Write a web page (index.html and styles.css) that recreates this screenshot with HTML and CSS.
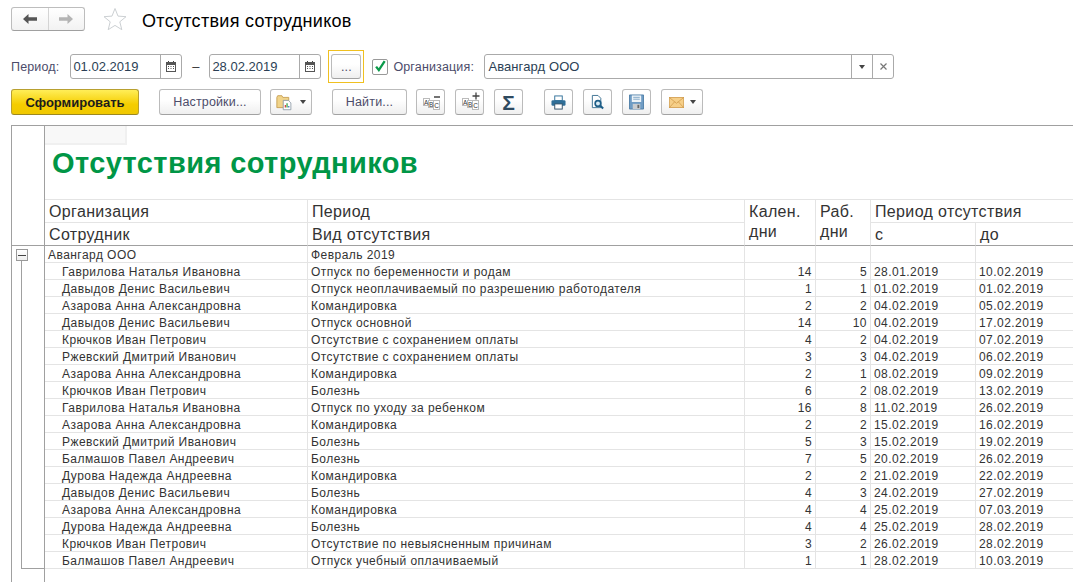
FILE: index.html
```html
<!DOCTYPE html>
<html lang="ru">
<head>
<meta charset="utf-8">
<title>Отсутствия сотрудников</title>
<link rel="stylesheet" href="styles.css">
</head>
<body>
<header class="head">
  <div class="nav">
    <button class="nav-btn nav-back"><svg width="16" height="12" viewBox="0 0 16 12"><path d="M1 6 6.5 1v3.2H15v3.6H6.5V11z" fill="#555"/></svg></button>
    <button class="nav-btn"><svg width="16" height="12" viewBox="0 0 16 12"><path d="M15 6 9.5 1v3.2H1v3.6h8.5V11z" fill="#b4b4b4"/></svg></button>
  </div>
  <svg class="star" width="24" height="24" viewBox="0 0 24 24"><path d="M12 1.5l3 7.6 8 .6-6.200 5.100 2 7.900L12 18.400 5.200 22.700l2-7.900L1 9.700l8-.6z" fill="#fff" stroke="#ccd0d3"/></svg>
  <h1 class="title">Отсутствия сотрудников</h1>
</header>

<div class="filters">
  <span class="label">Период:</span>
  <div class="field date"><span class="value">01.02.2019</span><span class="addon"><svg width="10" height="11" viewBox="0 0 10 11"><path d="M2.500 0v2M7.500 0v2" stroke="#444"/><rect x=".5" y="1.500" width="9" height="9" fill="#fff" stroke="#555"/><rect x="1" y="2" width="8" height="2" fill="#555"/><path d="M2 5.500h1M4.500 5.500h1M7 5.500h1M2 7.500h1M4.500 7.500h1M7 7.500h1" stroke="#555"/></svg></span></div>
  <span class="dash">–</span>
  <div class="field date"><span class="value">28.02.2019</span><span class="addon"><svg width="10" height="11" viewBox="0 0 10 11"><path d="M2.500 0v2M7.500 0v2" stroke="#444"/><rect x=".5" y="1.500" width="9" height="9" fill="#fff" stroke="#555"/><rect x="1" y="2" width="8" height="2" fill="#555"/><path d="M2 5.500h1M4.500 5.500h1M7 5.500h1M2 7.500h1M4.500 7.500h1M7 7.500h1" stroke="#555"/></svg></span></div>
  <div class="focus"><button class="btn dots">...</button></div>
  <span class="check"><svg width="18" height="18" viewBox="0 0 18 18"><path d="M4 8.500 7.500 13 15 1.500" fill="none" stroke="#0a9a4a" stroke-width="3"/></svg></span>
  <span class="label org-label">Организация:</span>
  <div class="field org"><span class="value">Авангард ООО</span><span class="addon"><i class="caret"></i></span><span class="addon"><svg width="9" height="9" viewBox="0 0 9 9"><path d="M1.500 1.500l6 6M7.500 1.500l-6 6" stroke="#777" stroke-width="1.200"/></svg></span></div>
</div>

<div class="toolbar">
  <button class="btn primary">Сформировать</button>
  <button class="btn w-settings">Настройки...</button>
  <button class="btn split"><svg width="17" height="17" viewBox="0 0 20 20"><path d="M1 16V4l1-2h5l1 2h7v4H9v8z" fill="#f1d48a" stroke="#c49a4a"/><path d="M8.500 7.500h6l3 3v8h-9z" fill="#fff" stroke="#8c9aa5"/><path d="M11 16v-3" stroke="#d8443a" stroke-width="1.500"/><path d="M13 16v-5" stroke="#3aa34a" stroke-width="1.500"/><path d="M15 16v-2" stroke="#3a78c4" stroke-width="1.500"/></svg><i class="caret"></i></button>
  <button class="btn w-find">Найти...</button>
  <button class="btn icon"><svg width="22" height="20" viewBox="0 0 22 20"><rect x="3.500" y="6.500" width="6" height="7" fill="#fff" stroke="#bbb"/><rect x="8.500" y="8.500" width="5" height="7" fill="#fff" stroke="#bbb"/><rect x="13.500" y="8.500" width="6" height="9" fill="#fff" stroke="#bbb"/><text class="abc" x="4" y="12.500">A</text><text class="abc" x="9" y="14.500">B</text><text class="abc" x="14.200" y="16">C</text><path d="M14 5h6" stroke="#444" stroke-width="1.500"/></svg></button>
  <button class="btn icon"><svg width="22" height="20" viewBox="0 0 22 20"><rect x="3.500" y="6.500" width="6" height="7" fill="#fff" stroke="#bbb"/><rect x="8.500" y="8.500" width="5" height="7" fill="#fff" stroke="#bbb"/><rect x="13.500" y="8.500" width="6" height="9" fill="#fff" stroke="#bbb"/><text class="abc" x="4" y="12.500">A</text><text class="abc" x="9" y="14.500">B</text><text class="abc" x="14.200" y="16">C</text><path d="M13.500 4h7M17 .5v7" stroke="#444" stroke-width="1.300"/></svg></button>
  <button class="btn icon sigma">Σ</button>
  <button class="btn icon gap-l"><svg width="15" height="15" viewBox="0 0 16 16"><rect x="4" y="1" width="8" height="5" fill="#fff" stroke="#2f6f98"/><rect x=".5" y="5.500" width="15" height="6" rx="1.500" fill="#2f6f98"/><rect x="4" y="9.500" width="8" height="5.500" fill="#fff" stroke="#2f4f68"/></svg></button>
  <button class="btn icon"><svg width="15" height="16" viewBox="0 0 16 17"><path d="M2.500 1.500h6l3 3v10h-9z" fill="#fff" stroke="#3a6f90"/><circle cx="8.500" cy="10" r="3" fill="#d9ecf6" stroke="#1f5f88" stroke-width="1.800"/><path d="M11 12.500l3 3" stroke="#1f5f88" stroke-width="2.200"/></svg></button>
  <button class="btn icon"><svg width="15" height="16" viewBox="0 0 16 16"><path d="M.5.500h15v15H.5z" fill="#6f9cc4" stroke="#4f7fa8"/><rect x="3" y="1" width="10" height="7" fill="#eef4f8"/><path d="M4.500 3h7M4.500 5h7" stroke="#7ea4c4"/><rect x="4" y="10" width="8" height="5.500" fill="#c8ccd0"/><rect x="9" y="11" width="2" height="3.500" fill="#666"/></svg></button>
  <button class="btn split mail"><svg width="15" height="11" viewBox="0 0 21 14" preserveAspectRatio="none"><rect x=".5" y=".5" width="20" height="13" fill="#f6cf88" stroke="#d09a4a"/><path d="M1 1l9.500 7L20 1M1 13l7-7M20 13l-7-7" fill="none" stroke="#d09a4a"/></svg><i class="caret"></i></button>
</div>

<section class="sheet">
  <aside class="gutter">
    <div class="gutter-head"></div>
    <div class="tree-box"><i></i></div>
    <div class="tree-line"></div>
  </aside>
  <div class="body">
    <table class="report">
      <colgroup>
        <col class="c1"><col class="c2"><col class="c3"><col class="c4"><col class="c5"><col class="c6">
      </colgroup>
      <thead>
        <tr class="title-row"><td colspan="6"><div class="corner"></div><div class="report-title">Отсутствия сотрудников</div></td></tr>
        <tr class="hrow"><th>Организация</th><th>Период</th><th rowspan="2" class="multi">Кален.<br>дни</th><th rowspan="2" class="multi">Раб.<br>дни</th><th colspan="2" class="last">Период отсутствия</th></tr>
        <tr class="hrow sep"><th>Сотрудник</th><th>Вид отсутствия</th><th>с</th><th class="last">до</th></tr>
      </thead>
      <tbody>
        <tr><td>Авангард ООО</td><td>Февраль 2019</td><td></td><td></td><td></td><td class="last"></td></tr>
        <tr><td class="in">Гаврилова Наталья Ивановна</td><td>Отпуск по беременности и родам</td><td class="n">14</td><td class="n">5</td><td>28.01.2019</td><td class="last">10.02.2019</td></tr>
        <tr><td class="in">Давыдов Денис Васильевич</td><td>Отпуск неоплачиваемый по разрешению работодателя</td><td class="n">1</td><td class="n">1</td><td>01.02.2019</td><td class="last">01.02.2019</td></tr>
        <tr><td class="in">Азарова Анна Александровна</td><td>Командировка</td><td class="n">2</td><td class="n">2</td><td>04.02.2019</td><td class="last">05.02.2019</td></tr>
        <tr><td class="in">Давыдов Денис Васильевич</td><td>Отпуск основной</td><td class="n">14</td><td class="n">10</td><td>04.02.2019</td><td class="last">17.02.2019</td></tr>
        <tr><td class="in">Крючков Иван Петрович</td><td>Отсутствие с сохранением оплаты</td><td class="n">4</td><td class="n">2</td><td>04.02.2019</td><td class="last">07.02.2019</td></tr>
        <tr><td class="in">Ржевский Дмитрий Иванович</td><td>Отсутствие с сохранением оплаты</td><td class="n">3</td><td class="n">3</td><td>04.02.2019</td><td class="last">06.02.2019</td></tr>
        <tr><td class="in">Азарова Анна Александровна</td><td>Командировка</td><td class="n">2</td><td class="n">1</td><td>08.02.2019</td><td class="last">09.02.2019</td></tr>
        <tr><td class="in">Крючков Иван Петрович</td><td>Болезнь</td><td class="n">6</td><td class="n">2</td><td>08.02.2019</td><td class="last">13.02.2019</td></tr>
        <tr><td class="in">Гаврилова Наталья Ивановна</td><td>Отпуск по уходу за ребенком</td><td class="n">16</td><td class="n">8</td><td>11.02.2019</td><td class="last">26.02.2019</td></tr>
        <tr><td class="in">Азарова Анна Александровна</td><td>Командировка</td><td class="n">2</td><td class="n">2</td><td>15.02.2019</td><td class="last">16.02.2019</td></tr>
        <tr><td class="in">Ржевский Дмитрий Иванович</td><td>Болезнь</td><td class="n">5</td><td class="n">3</td><td>15.02.2019</td><td class="last">19.02.2019</td></tr>
        <tr><td class="in">Балмашов Павел Андреевич</td><td>Болезнь</td><td class="n">7</td><td class="n">5</td><td>20.02.2019</td><td class="last">26.02.2019</td></tr>
        <tr><td class="in">Дурова Надежда Андреевна</td><td>Командировка</td><td class="n">2</td><td class="n">2</td><td>21.02.2019</td><td class="last">22.02.2019</td></tr>
        <tr><td class="in">Давыдов Денис Васильевич</td><td>Болезнь</td><td class="n">4</td><td class="n">3</td><td>24.02.2019</td><td class="last">27.02.2019</td></tr>
        <tr><td class="in">Азарова Анна Александровна</td><td>Командировка</td><td class="n">4</td><td class="n">4</td><td>25.02.2019</td><td class="last">07.03.2019</td></tr>
        <tr><td class="in">Дурова Надежда Андреевна</td><td>Болезнь</td><td class="n">4</td><td class="n">4</td><td>25.02.2019</td><td class="last">28.02.2019</td></tr>
        <tr><td class="in">Крючков Иван Петрович</td><td>Отсутствие по невыясненным причинам</td><td class="n">3</td><td class="n">2</td><td>26.02.2019</td><td class="last">28.02.2019</td></tr>
        <tr><td class="in">Балмашов Павел Андреевич</td><td>Отпуск учебный оплачиваемый</td><td class="n">1</td><td class="n">1</td><td>28.02.2019</td><td class="last">10.03.2019</td></tr>
      </tbody>
    </table>
  </div>
</section>
</body>
</html>
```

FILE: styles.css
```css
* { box-sizing: border-box; }
html, body { height: 100%; }
body {
  margin: 0;
  height: 582px;
  overflow: hidden;
  display: flex;
  flex-direction: column;
  background: #fff;
  font-family: "Liberation Sans", Arial, sans-serif;
  font-size: 12px;
  color: #333;
}
button { font-family: inherit; padding: 0; margin: 0; }

/* head */
.head { display: flex; align-items: center; height: 24px; margin: 7px 0 0 11px; }
.nav {
  display: flex; width: 74px; height: 24px;
  border: 1px solid #bdbdbd; border-bottom-color: #a0a0a0; border-radius: 3px;
  background: linear-gradient(#fff, #f2f2f2);
}
.nav-btn { flex: 1; border: 0; background: none; display: flex; align-items: center; justify-content: center; }
.nav-back { border-right: 1px solid #d4d4d4; }
.star { margin-left: 18px; }
.title { margin: 3px 0 0 15px; font-size: 18px; font-weight: 400; color: #000; line-height: 24px; letter-spacing: .3px; }

/* filters */
.filters { display: flex; align-items: center; height: 33px; margin: 19px 0 0 11px; }
.label { font-size: 12.500px; color: #4c4c6a; letter-spacing: .15px; }
.field {
  display: flex; height: 25px; align-items: stretch;
  border: 1px solid #aaa; border-radius: 3px; background: #fff;
}
.date { width: 112px; margin-left: 11px; }
.value { flex: 1; padding: 0 2px; line-height: 23px; font-size: 13px; color: #2b3f55; }
.addon { width: 21px; border-left: 1px solid #aaa; display: flex; align-items: center; justify-content: center; flex: none; }
.dash { width: 27px; margin-right: -11px; text-align: center; color: #333; font-size: 13px; }
.focus {
  width: 36px; height: 33px; margin-left: 7px;
  border: 1px solid #f0c020; padding: 3px 2px;
  display: flex;
}
.dots { width: 30px; height: 25px; font-size: 11px; color: #666; }
.check {
  width: 16px; height: 16px; margin-left: 8px;
  border: 1px solid #999; border-radius: 2px; background: #fff;
  display: flex; align-items: center; justify-content: center; flex: none;
}
.org-label { margin-left: 5px; width: 80px; flex: none; white-space: nowrap; }
.org { width: 410px; margin-left: 11px; }
.org .value { padding-left: 3px; letter-spacing: .1px; }
.org .addon { width: 21px; }
.caret { display: inline-block; width: 0; height: 0; border: 3.500px solid transparent; border-top: 4px solid #444; border-bottom: 0; }

/* toolbar */
.toolbar { display: flex; align-items: center; height: 26px; margin: 6px 0 0 11px; }
.btn {
  height: 26px;
  border: 1px solid #bbb; border-bottom-color: #a2a2a2; border-radius: 3px;
  background: linear-gradient(#fff 40%, #efefef);
  color: #4c4c6a; font-size: 12.500px; letter-spacing: .15px;
  display: flex; align-items: center; justify-content: center; flex: none;
}
.filters .btn { height: 25px; }
.primary {
  width: 128px; font-weight: 700; font-size: 13px; letter-spacing: 0; color: #1c1c1c;
  background: linear-gradient(#ffee58, #f5cd00 60%, #f0c800);
  border-color: #b8a030; border-bottom-color: #9c8820;
}
.w-settings { width: 102px; margin-left: 20px; }
.split { width: 42px; margin-left: 9px; gap: 7px; }
.w-find { width: 75px; margin-left: 20px; }
.icon { width: 29px; margin-left: 10px; }
.w-find + .icon { margin-left: 9px; }
.gap-l { margin-left: 21px; }
.sigma { font-size: 21px; font-weight: 700; color: #2f4a5f; letter-spacing: 0; line-height: 1; }
.mail { margin-left: 10px; gap: 6px; }
.abc { font-size: 6.500px; font-family: "Liberation Sans", sans-serif; fill: #333; }

/* sheet */
.sheet {
  flex: 1; display: flex; min-height: 0; overflow: hidden;
  margin: 10px 0 0 11px;
  border-top: 1px solid #a0a0a0; border-left: 1px solid #a0a0a0;
}
.gutter { width: 33px; flex: none; border-right: 1px solid #a0a0a0; }
.gutter-head { height: 120px; border-bottom: 1px solid #a0a0a0; }
.tree-box {
  width: 12px; height: 12px; margin: 3px 0 0 4px;
  border: 1px solid #999; background: linear-gradient(#fff, #eee);
  display: flex; align-items: center; justify-content: center;
}
.tree-box i { width: 8px; height: 1px; background: #444; }
.tree-line { height: 308px; margin-left: 9px; border-left: 1px solid #a0a0a0; border-bottom: 1px solid #a0a0a0; }
.body { flex: 1; min-width: 0; }

.report { table-layout: fixed; width: 1028px; border-collapse: separate; border-spacing: 0; }
.c1 { width: 263px; } .c2 { width: 437px; } .c3 { width: 71px; }
.c4 { width: 55px; } .c5 { width: 105px; } .c6 { width: 97px; }
.report td, .report th {
  padding: 0 3px; border-right: 1px solid #e4e4e4; border-bottom: 1px solid #e4e4e4;
  white-space: nowrap; overflow: hidden; font-weight: 400; text-align: left;
}
.report .last { border-right: 0; }
.title-row td { height: 74px; padding: 0; border-right: 0; vertical-align: top; }
.corner { width: 82px; height: 19px; background: #f8f8f8; border-right: 2px solid #f0f0f0; border-bottom: 2px solid #f0f0f0; }
.report-title { margin: 2px 0 0 7px; font-size: 29px; line-height: 32px; font-weight: 700; color: #009646; letter-spacing: .4px; }
.hrow th { height: 23px; padding: 2px 4px 0; font-size: 16px; color: #333; line-height: 20px; vertical-align: top; letter-spacing: .35px; }
.hrow.sep th { border-bottom-color: #a0a0a0; }
.hrow th.multi { border-bottom-color: #a0a0a0; }
.report tbody td { height: 17px; line-height: 14px; font-size: 12px; color: #333; padding: 2px 3px 0; letter-spacing: .45px; }
.report tbody td.in { padding-left: 17px; }
.report tbody td.n { text-align: right; padding-right: 3px; }
```
